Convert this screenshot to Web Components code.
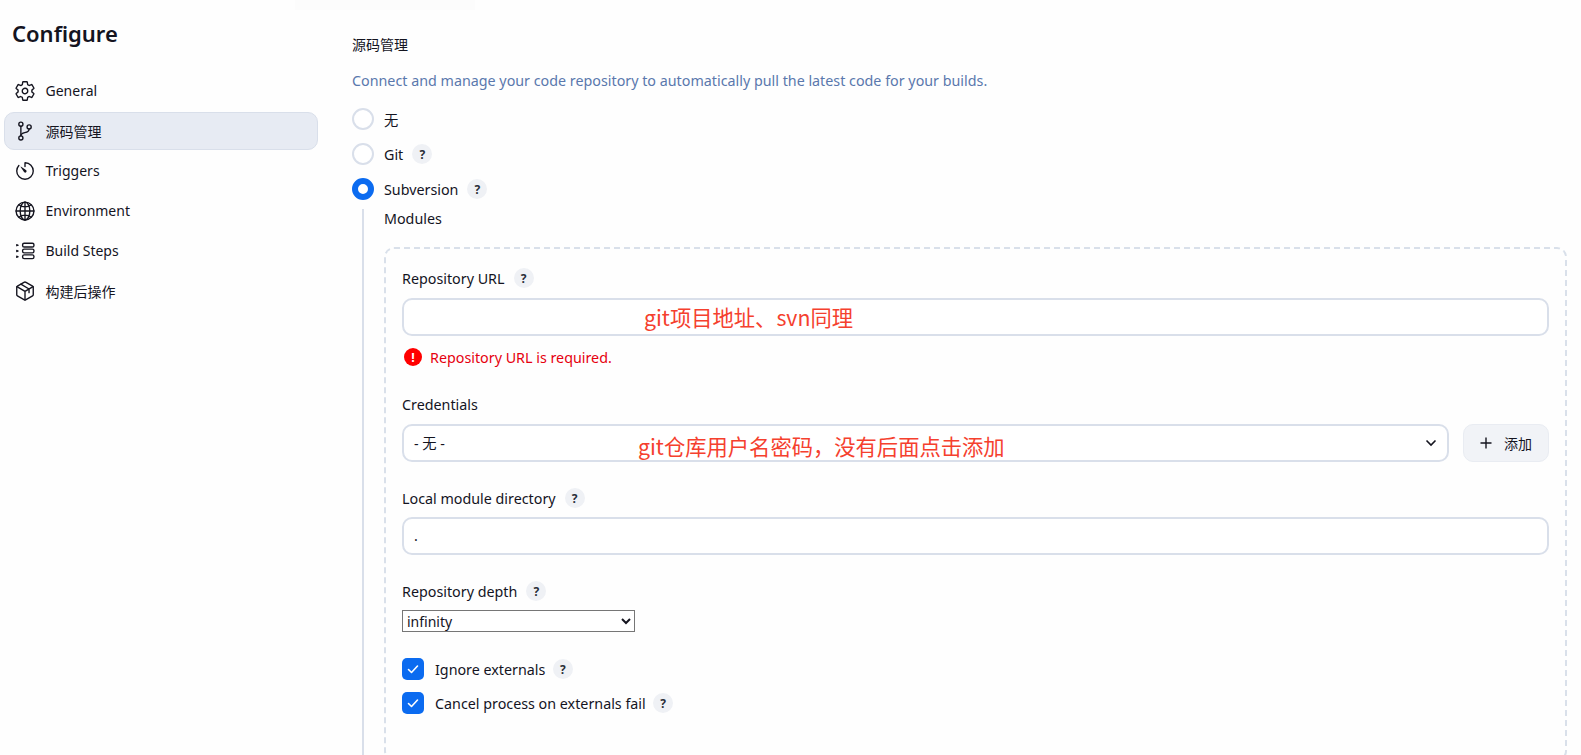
<!DOCTYPE html>
<html>
<head>
<meta charset="utf-8">
<style>
html, body { margin: 0; height: 100%; overflow: hidden; background: #fefefe; }
body { font-family: "Noto Sans", "Noto Sans CJK SC", sans-serif; color: #14141f; }
</style>
</head>
<body>
<config-page></config-page>
<script>
// ionicons-style outlines on a 512 grid
const ICONS = {
    gear: `<path d="M262.29 192.31a64 64 0 1057.4 57.4 64.13 64.13 0 00-57.4-57.4zM416.39 256a154.34 154.34 0 01-1.53 20.79l45.21 35.46a10.81 10.81 0 012.45 13.75l-42.77 74a10.81 10.81 0 01-13.14 4.59l-44.9-18.08a16.11 16.11 0 00-15.17 1.75A164.48 164.48 0 01325 400.8a15.94 15.94 0 00-8.82 12.14l-6.73 47.89a11.08 11.08 0 01-10.68 9.17h-85.54a11.11 11.11 0 01-10.69-8.87l-6.72-47.82a16.07 16.07 0 00-9-12.22 155.3 155.3 0 01-21.46-12.57 16 16 0 00-15.11-1.71l-44.89 18.07a10.81 10.81 0 01-13.14-4.58l-42.77-74a10.8 10.8 0 012.45-13.75l38.21-30a16.05 16.05 0 006-14.08c-.36-4.17-.58-8.33-.58-12.5s.21-8.27.58-12.35a16 16 0 00-6.07-13.94l-38.19-30A10.81 10.81 0 0149.48 186l42.77-74a10.81 10.81 0 0113.14-4.59l44.9 18.08a16.11 16.11 0 0015.17-1.75A164.48 164.48 0 01187 111.2a15.94 15.94 0 008.82-12.14l6.73-47.89A11.08 11.08 0 01213.23 42h85.54a11.11 11.11 0 0110.69 8.87l6.72 47.82a16.07 16.07 0 009 12.22 155.3 155.3 0 0121.46 12.57 16 16 0 0015.11 1.71l44.89-18.07a10.81 10.81 0 0113.14 4.58l42.77 74a10.8 10.8 0 01-2.45 13.75l-38.21 30a16.05 16.05 0 00-6.05 14.08c.33 4.14.55 8.3.55 12.47z"/>`,
    branch: `<circle cx="160" cy="96" r="48"/><circle cx="160" cy="416" r="48"/><path d="M160 368V144"/><circle cx="352" cy="160" r="48"/><path d="M352 208c0 128-192 48-192 160"/>`,
    clock: `<path d="M112.91 128A191.85 191.85 0 0064 254c-1.18 106.35 85.65 193.8 192 194 106.2.2 192-85.83 192-192 0-104.54-83.55-189.61-187.5-192a4.36 4.36 0 00-4.5 4.37V152"/><path stroke="none" fill="#14141f" d="M233.38 278.63l-79-113a8.13 8.13 0 0111.32-11.32l113 79a32.5 32.5 0 01-37.25 53.26 33.21 33.21 0 01-8.07-7.94z"/>`,
    globe: `<path d="M256 48C141.13 48 48 141.13 48 256s93.13 208 208 208 208-93.13 208-208S370.87 48 256 48z"/><path d="M256 48c-58.07 0-112.67 93.31-112.67 208S197.93 464 256 464s112.67-93.31 112.67-208S314.07 48 256 48z"/><path d="M117.33 117.33c38.24 27.15 86.38 43.34 138.67 43.34s100.43-16.19 138.67-43.34M394.67 394.67c-38.24-27.15-86.38-43.34-138.67-43.34s-100.43 16.19-138.67 43.34M256 48v416M464 256H48"/>`,
    steps: `<rect x="200" y="76" width="264" height="88" rx="36"/><rect x="200" y="211" width="264" height="88" rx="36"/><rect x="200" y="346" width="264" height="88" rx="36"/><path stroke-width="26" d="M62 104l36 16-36 16zM62 239l36 16-36 16zM62 374l36 16-36 16z"/>`,
    box: `<path d="M448 341.37V170.61A32 32 0 00432.11 143l-152-88.46a47.94 47.94 0 00-48.24 0L79.89 143A32 32 0 0064 170.61v170.76A32 32 0 0079.89 369l152 88.46a48 48 0 0048.24 0l152-88.46A32 32 0 00448 341.37z"/><path d="M69 154l187 110 187-110M256 464V264M160 98l190 112v84"/>`
};

class NavItem extends HTMLElement {
    connectedCallback() {
        const icon = ICONS[this.getAttribute("icon")];
        this.attachShadow({ mode: "open" }).innerHTML = `
        <style>
            :host {
                display: flex;
                align-items: center;
                gap: 10px;
                height: 38px;
                margin-bottom: 2px;
                padding-left: 8.5px;
                box-sizing: border-box;
                border-radius: 10px;
                border: 1.5px solid transparent;
                font-size: 14px;
            }
            :host([active]) {
                background: #e7ebf3;
                border-color: #d9dfea;
            }
            svg { width: 22px; height: 22px; fill: none; stroke: #14141f; stroke-width: 32; stroke-linecap: round; stroke-linejoin: round; flex: none; }
        </style>
        <svg viewBox="0 0 512 512">${icon}</svg><slot></slot>`;
    }
}

class HelpMark extends HTMLElement {
    connectedCallback() {
        this.attachShadow({ mode: "open" }).innerHTML = `
        <style>
            :host {
                display: inline-flex;
                align-items: center;
                justify-content: center;
                width: 20px;
                height: 20px;
                border-radius: 50%;
                background: #eff1f5;
                font-size: 12px;
                font-weight: 700;
                color: #2a2e38;
                margin-left: 9px;
            }
        </style>?`;
    }
}

class RadioRow extends HTMLElement {
    connectedCallback() {
        this.attachShadow({ mode: "open" }).innerHTML = `
        <style>
            :host { display: flex; align-items: center; gap: 10px; height: 22px; margin-bottom: 13px; }
            .dot { width: 22px; height: 22px; box-sizing: border-box; border-radius: 50%; border: 2px solid #d9dfea; background: #fff; flex: none; }
            :host([checked]) .dot { border: 6.5px solid #0b6bf0; background: #fff; }
            .label { display: flex; align-items: center; }
        </style>
        <span class="dot"></span><span class="label"><slot></slot></span>`;
    }
}

class CheckRow extends HTMLElement {
    connectedCallback() {
        this.attachShadow({ mode: "open" }).innerHTML = `
        <style>
            :host { display: flex; align-items: center; gap: 11px; height: 22px; margin-bottom: 12px; }
            .box { width: 22px; height: 22px; border-radius: 5px; background: #0b6bf0; display: flex; align-items: center; justify-content: center; flex: none; }
            svg { width: 14px; height: 14px; fill: none; stroke: #fff; stroke-width: 1.6; stroke-linecap: round; stroke-linejoin: round; }
            .label { display: flex; align-items: center; }
        </style>
        <span class="box"><svg viewBox="0 0 14 14"><path d="M2.5 7.5l3 3 6-6.5"/></svg></span><span class="label"><slot></slot></span>`;
    }
}

class FieldLabel extends HTMLElement {
    connectedCallback() {
        this.attachShadow({ mode: "open" }).innerHTML = `
        <style>
            :host { display: flex; align-items: center; height: 20px; margin-bottom: 9px; }
        </style>
        <slot></slot>`;
    }
}

class TextBox extends HTMLElement {
    connectedCallback() {
        const noteY = this.getAttribute("note-y") || 0;
        this.attachShadow({ mode: "open" }).innerHTML = `
        <style>
            :host {
                display: flex;
                align-items: center;
                position: relative;
                flex: 1;
                height: 38px;
                box-sizing: border-box;
                border: 2px solid #d9dfea;
                border-radius: 10px;
                background: #fff;
                padding: 0 10px 2px;
            }
            svg { position: absolute; right: 10px; top: 12px; width: 12px; height: 10px; fill: none; stroke: #14141f; stroke-width: 1.6; }
            .note { position: absolute; top: 50%; transform: translateY(-50%); color: #f5402e; font-size: 21.3px; white-space: nowrap; font-family: "Noto Sans CJK SC", sans-serif; }
        </style>
        <slot></slot>
        ${this.hasAttribute("note") ? `<span class="note" style="left:${this.getAttribute("note-x")}px;margin-top:${noteY}px">${this.getAttribute("note")}</span>` : ""}
        ${this.hasAttribute("chevron") ? `<svg viewBox="0 0 12 10"><path d="M1.5 2.5L6 7l4.5-4.5"/></svg>` : ""}`;
    }
}

class ConfigPage extends HTMLElement {
    connectedCallback() {
        this.attachShadow({ mode: "open" }).innerHTML = `
        <style>
            :host { display: flex; height: 755px; overflow: hidden; position: relative; }
            .smudge { position: absolute; left: 295px; top: 0; width: 180px; height: 10px; background: #fcfcfc; }
            .side { width: 318px; flex: none; padding: 19px 0 0 4px; box-sizing: border-box; }
            h1 { font-size: 22px; font-weight: 600; margin: 0 0 24.5px 8px; line-height: 28px; }
            .main { flex: 1; padding: 35px 14px 0 34px; min-width: 0; font-size: 14.3px; }
            h2 { font-size: 14px; font-weight: 400; margin: 0; line-height: 20px; }
            .desc { color: #5a78ad; margin: 16px 0 17px; line-height: 20px; }
            .tree { margin-left: 10px; border-left: 2px solid #d9dfea; padding: 0 0 0 20px; margin-top: -4px; height: 600px; }
            .mod { height: 20px; line-height: 20px; margin-bottom: 18px; }
            .panel { border: 2px dashed #d9e0ea; border-radius: 10px; padding: 19px 16px 40px; height: 514px; box-sizing: border-box; }
            .err { display: flex; align-items: center; gap: 8px; color: #e6000f; height: 20px; margin: 11px 0 27px 2px; }
            .err i { width: 18px; height: 18px; border-radius: 50%; background: #f00; color: #fff; font: 700 12px Inter, sans-serif; display: flex; align-items: center; justify-content: center; }
            .row { display: flex; gap: 14px; margin-bottom: 26px; }
            .add { width: 86px; height: 38px; box-sizing: border-box; border-radius: 10px; background: #f1f3f7; border: 1.5px solid #e9ecf2; display: flex; align-items: center; justify-content: center; gap: 12px; font-size: 14px; }
            .add svg { width: 12px; height: 12px; stroke: #14141f; stroke-width: 1.4; fill: none; }
            select { display: block; width: 233px; height: 22px; font: 14px "Noto Sans", sans-serif; margin-bottom: 26px; background: #fff; color: #14141f; border: 1px solid #767676; border-radius: 0; }
            field-label.gap { margin-bottom: 10px; }
            check-row help-mark { margin-left: 7.5px; }
        </style>
        <div class="smudge"></div>
        <div class="side">
            <h1>Configure</h1>
            <nav-item icon="gear">General</nav-item>
            <nav-item icon="branch" active>源码管理</nav-item>
            <nav-item icon="clock">Triggers</nav-item>
            <nav-item icon="globe">Environment</nav-item>
            <nav-item icon="steps">Build Steps</nav-item>
            <nav-item icon="box">构建后操作</nav-item>
        </div>
        <div class="main">
            <h2>源码管理</h2>
            <p class="desc">Connect and manage your code repository to automatically pull the latest code for your builds.</p>
            <radio-row>无</radio-row>
            <radio-row>Git<help-mark></help-mark></radio-row>
            <radio-row checked>Subversion<help-mark></help-mark></radio-row>
            <div class="tree">
                <div class="mod">Modules</div>
                <div class="panel">
                    <field-label class="gap">Repository URL<help-mark></help-mark></field-label>
                    <text-box note="git项目地址、svn同理" note-x="240" note-y="-1"></text-box>
                    <div class="err"><i>!</i>Repository URL is required.</div>
                    <field-label class="gap">Credentials</field-label>
                    <div class="row">
                        <text-box chevron note="git仓库用户名密码，没有后面点击添加" note-x="234" note-y="1.5">- 无 -</text-box>
                        <div class="add"><svg viewBox="0 0 12 12"><path d="M6 .5v11M.5 6h11"/></svg>添加</div>
                    </div>
                    <field-label>Local module directory<help-mark></help-mark></field-label>
                    <text-box style="margin-bottom:26px">.</text-box>
                    <field-label>Repository depth<help-mark></help-mark></field-label>
                    <select><option>infinity</option></select>
                    <check-row>Ignore externals<help-mark></help-mark></check-row>
                    <check-row>Cancel process on externals fail<help-mark></help-mark></check-row>
                </div>
            </div>
        </div>`;
    }
}

customElements.define("nav-item", NavItem);
customElements.define("help-mark", HelpMark);
customElements.define("radio-row", RadioRow);
customElements.define("check-row", CheckRow);
customElements.define("field-label", FieldLabel);
customElements.define("text-box", TextBox);
customElements.define("config-page", ConfigPage);
</script>
</body>
</html>
